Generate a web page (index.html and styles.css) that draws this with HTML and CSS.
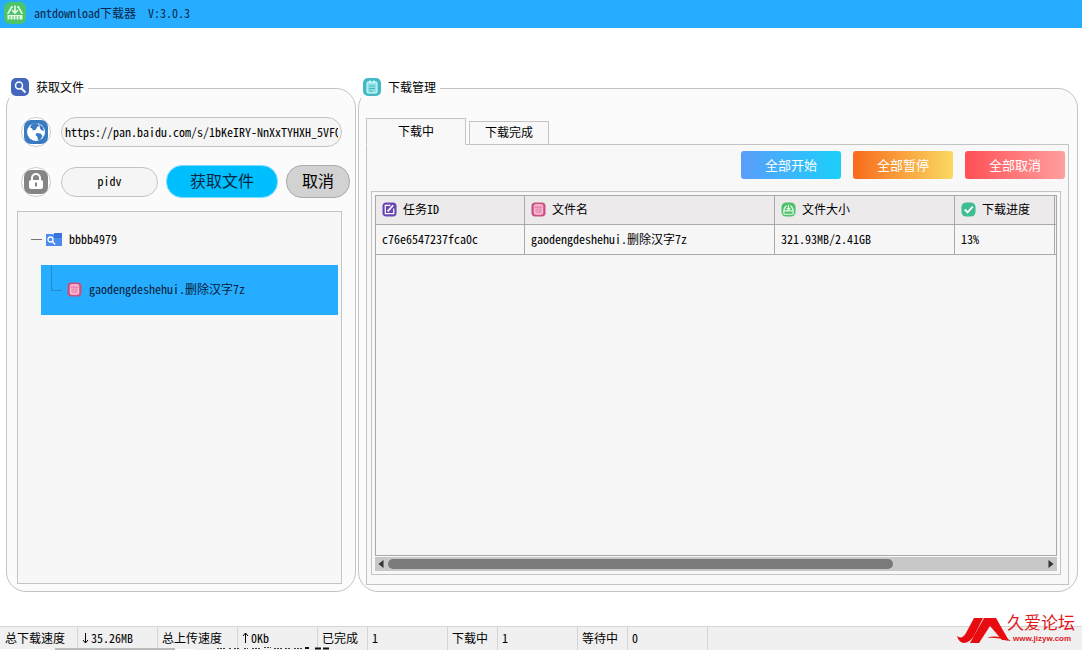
FILE: index.html
```html
<!DOCTYPE html>
<html lang="zh-CN">
<head>
<meta charset="utf-8">
<title>antdownload下载器</title>
<link rel="stylesheet" href="styles.css">
</head>
<body>
<svg class="sprite" aria-hidden="true">
  <symbol id="i-disk" viewBox="0 0 22 22">
    <rect width="22" height="22" rx="6" fill="#4cc46a"/>
    <path d="M9 5H7.500L3.500 12.500M13 5h1.500l4 7.500M11 3.500v7M8 8l3 3 3-3" fill="none" stroke="#e6fbe6" stroke-width="1.600"/>
    <path d="M3 12.500h16V18H3zM6 14v4M9 14v4M12 14v4M15 14v4" fill="#e6fbe6" stroke="#4cc46a" stroke-width="1"/>
  </symbol>
  <symbol id="i-size" viewBox="0 0 16 16">
    <rect x=".5" y=".5" width="15" height="15" rx="5" fill="#4fc16c"/>
    <path d="M6 4Q3 6 3 9.500M10 4q3 2 3 5.500M8 3v5M6 6.500l2 2 2-2" fill="none" stroke="#e6fbe6" stroke-width="1.200"/>
    <rect x="3" y="9.500" width="10" height="3.500" rx="1" fill="none" stroke="#e6fbe6" stroke-width="1.200"/>
  </symbol>
  <symbol id="i-file" viewBox="0 0 16 16">
    <rect x=".5" y=".5" width="15" height="15" rx="4" fill="#c94f80"/>
    <rect x="3.500" y="3" width="9" height="10" rx="1" fill="#f3a0c1" stroke="#ffd3e5"/>
    <path d="M3.500 5.500h9" stroke="#e07fa9"/><path d="M6.500 7v4.500M9.500 7v4.500" stroke="#e583ab"/>
  </symbol>
</svg>
<header class="titlebar">
  <svg class="app-icon"><use href="#i-disk"/></svg>
  <h1>antdownload下载器&nbsp; V:3.0.3</h1>
</header>
<main class="workspace">
  <fieldset class="panel fetch">
    <legend>
      <svg class="legend-icon" viewBox="0 0 18 18"><rect width="18" height="18" rx="5" fill="#4467bd"/><circle cx="8" cy="7.500" r="3.500" fill="none" stroke="#fff" stroke-width="1.500"/><path d="M10.500 10.500l4 4" stroke="#fff" stroke-width="2"/></svg>
      <span>获取文件</span>
    </legend>
    <form class="fetch-form">
      <label class="round" for="link" aria-label="链接">
        <svg viewBox="0 0 24 24"><rect width="24" height="24" rx="7" fill="#397bc3"/><circle cx="12" cy="12" r="9" fill="#fff"/><path d="M8 4q3-1.500 6-.5l1 2.500-2 1-1 2.500-3 1-1-2-2-1zM15 4l4 3 1 4-3-1-1-2zM12.500 13l4 .5 2 2.500-2 3.500-2.500 1-.500-3.500-2-2z" fill="#397bc3"/></svg>
      </label>
      <input id="link" class="field wide" type="text" value="https://pan.baidu.com/s/1bKeIRY-NnXxTYHXH_5VFQ">
      <label class="round" for="code" aria-label="提取码">
        <svg viewBox="0 0 24 24"><rect width="24" height="24" rx="7" fill="#858585"/><path d="M8 11V8a4 4 0 0 1 8 0v3" fill="none" stroke="#fff" stroke-width="2"/><rect x="5" y="10" width="14" height="9" rx="2" fill="#fff"/><path d="M12 12.500v4" stroke="#858585" stroke-width="2"/></svg>
      </label>
      <input id="code" class="field code" type="text" value="pidv">
      <button class="pill primary" type="button">获取文件</button>
      <button class="pill" type="button">取消</button>
    </form>
    <div class="tree">
      <div class="node">
        <span class="dash"></span>
        <svg class="folder" viewBox="0 0 16 13"><path d="M0 1h7l1 1V0h8v13H0z" fill="#4a8bed"/><path d="M8 0h8v5H8z" fill="#3874dc"/><circle cx="4.500" cy="6.500" r="2.500" fill="none" stroke="#fff" stroke-width="1.300"/><path d="M6.500 8.500l2.500 3" stroke="#fff" stroke-width="1.300"/></svg>
        <span>bbbb4979</span>
      </div>
      <div class="node child">
        <span class="elbow"></span>
        <svg class="small-icon"><use href="#i-file"/></svg>
        <span>gaodengdeshehui.删除汉字7z</span>
      </div>
    </div>
  </fieldset>
  <fieldset class="panel manage">
    <legend>
      <svg class="legend-icon" viewBox="0 0 18 18"><rect width="18" height="18" rx="5" fill="#42b9c4"/><rect x="4" y="4" width="10" height="11" rx="1" fill="#8ee0e3" stroke="#d8ffff"/><path d="M7 2.500v3M11 2.500v3" stroke="#d8ffff" stroke-width="1.500"/><path d="M6 8h6M6 10.500h6M6 13h4" stroke="#42b9c4"/></svg>
      <span>下载管理</span>
    </legend>
    <nav class="tabs">
      <button class="tab active" type="button">下载中</button>
      <button class="tab" type="button">下载完成</button>
    </nav>
    <section class="sheet">
      <div class="actions">
        <button class="start" type="button">全部开始</button>
        <button class="pause" type="button">全部暂停</button>
        <button class="cancel" type="button">全部取消</button>
      </div>
      <div class="table-frame">
        <div class="table-box">
          <table>
            <colgroup><col class="c-id"><col class="c-name"><col class="c-size"><col class="c-prog"><col></colgroup>
            <thead>
              <tr>
                <th><span class="head"><svg class="small-icon" viewBox="0 0 16 16"><rect x=".5" y=".5" width="15" height="15" rx="4" fill="#6845b5"/><path d="M9 3.500H3.500v9h9V7" fill="none" stroke="#fff" stroke-width="1.300"/><path d="M6 10l6-6.500" stroke="#fff" stroke-width="1.800"/></svg>任务ID</span></th>
                <th><span class="head"><svg class="small-icon"><use href="#i-file"/></svg>文件名</span></th>
                <th><span class="head"><svg class="small-icon"><use href="#i-size"/></svg>文件大小</span></th>
                <th><span class="head"><svg class="small-icon" viewBox="0 0 16 16"><rect x=".5" y=".5" width="15" height="15" rx="5" fill="#3dbd91"/><path d="M4 8l3 3 5.500-6" fill="none" stroke="#fff" stroke-width="2"/></svg>下载进度</span></th>
                <td></td>
              </tr>
            </thead>
            <tbody>
              <tr><td>c76e6547237fca0c</td><td>gaodengdeshehui.删除汉字7z</td><td>321.93MB/2.41GB</td><td>13%</td><td></td></tr>
            </tbody>
          </table>
        </div>
        <div class="scroll">
          <svg class="arrow" viewBox="0 0 6 10"><path d="M5.500 1v8L.500 5z" fill="#333"/></svg>
          <div class="track"><div class="thumb"></div></div>
          <svg class="arrow" viewBox="0 0 6 10"><path d="M.500 1v8l5-4z" fill="#333"/></svg>
        </div>
      </div>
    </section>
  </fieldset>
</main>
<footer class="status">
  <span class="cell label">总下载速度</span><span class="cell label"><svg class="vec" viewBox="0 0 7 12"><path d="M3.500 1v10M1 8l2.500 3L6 8" fill="none" stroke="#000"/></svg>35.26MB</span>
  <span class="cell label">总上传速度</span><span class="cell label"><svg class="vec" viewBox="0 0 7 12"><path d="M3.500 11V1M1 4l2.500-3L6 4" fill="none" stroke="#000"/></svg>0Kb</span>
  <span class="cell tag">已完成</span><span class="cell count">1</span>
  <span class="cell tag">下载中</span><span class="cell count">1</span>
  <span class="cell tag">等待中</span><span class="cell count">0</span>
  <svg class="strip" viewBox="0 0 340 3" aria-hidden="true">
    <path d="M0 2h50v1H0zM175 2h20v1h-20z" fill="#fff"/>
    <path d="M55 1h120v2H55z" fill="#b9b9b9"/>
    <path d="M217 1.500h9M229 1.500h3M234 1.500h6M244 1.500h4M252 1.500h9M264 .500h7M274 1.500h8M285 1.500h6M294 1.500h8" stroke="#444" stroke-dasharray="2 1"/>
    <path d="M305 1h4M315 1.500h6M323 1.500h6" stroke="#111" stroke-width="2"/>
  </svg>
  <a class="brand" href="#">
    <svg viewBox="0 0 54 27"><path d="M17 1h9L17 19q-5 7-10 7-5 0-7-7 5 4 9-3z" fill="#e80c10"/><path d="M27 1h12l12 21 3 2q-5-1-9-1L33 9 22 26h-9z" fill="#e80c10"/><path d="M30 21q10-4 22 3-11-4-22-3z" fill="#e80c10"/></svg>
    <span class="brand-text"><b>久爱论坛</b><small>www.jizyw.com</small></span>
  </a>
</footer>
</body>
</html>
```
FILE: styles.css
```css
* { box-sizing: border-box; }
body {
  margin: 0;
  min-height: 100vh;
  display: flex;
  flex-direction: column;
  background: #fff;
  color: #000;
  font: 12px/16px "Noto Sans Mono CJK SC", "Liberation Mono", "Noto Sans CJK SC", monospace;
}
button, input { font: inherit; color: inherit; margin: 0; }
svg { display: block; flex: none; }
.sprite { position: absolute; width: 0; height: 0; }

.titlebar { height: 28px; display: flex; align-items: center; gap: 8px; padding: 0 4px 2px; background: #26adff; }
.app-icon { width: 22px; height: 22px; }
.titlebar h1 { margin: 0; font-size: 12px; font-weight: 400; color: #0c2548; }

.workspace { flex: 1; display: grid; grid-template-columns: 350px minmax(0, 1fr); gap: 2px; padding: 50px 4px 34px 6px; }
.panel {
  min-width: 0;
  margin: 0;
  border: 1px solid #c4c4c4;
  border-radius: 20px;
  background: #fbfbfb;
  display: flex;
  flex-direction: column;
}
.panel legend { display: flex; align-items: center; gap: 7px; height: 20px; padding: 0 4px 2px; }
.legend-icon { width: 18px; height: 18px; }
.fetch { padding: 19px 13px 7px 10px; }
.manage { padding: 20px 8px 6px 7px; }
.fetch legend { margin-left: -10px; }
.manage legend { margin-left: -7px; }

.fetch-form { display: grid; grid-template-columns: 32px 97px 112px 64px; column-gap: 8px; row-gap: 18px; align-items: center; padding-left: 4px; margin-right: -8px; }
.round { width: 30px; height: 30px; border: 1px solid #ccc; border-radius: 50%; display: grid; place-items: center; background: #fff; }
.round svg { width: 24px; height: 24px; }
.field { height: 30px; min-width: 0; border: 1px solid #c4c4c4; border-radius: 15px; background: #f5f5f5; padding: 0 3px 2px; }
.wide { grid-column: 2 / 5; margin-right: 8px; }
.code { text-align: center; }
.pill { height: 33px; padding: 0 0 4px; border: 1px solid #aaa; border-radius: 16px; background: #d2d2d2; font-size: 16px; }
.pill.primary { background: #00bfff; border-color: #7edbff; color: #06283f; }

.tree { flex: 1; margin-top: 13px; padding: 3px; border: 1px solid #c4c4c4; background: #f7f7f7; }
.node { height: 50px; display: flex; align-items: center; gap: 7px; padding: 0 0 2px 10px; }
.dash { width: 11px; height: 1px; background: #777; margin-right: -3px; }
.folder { width: 16px; height: 13px; }
.node.child { margin-left: 20px; background: #26adff; color: #08203c; }
.elbow { width: 11px; height: 26px; align-self: flex-start; border: solid #268bc6; border-width: 0 0 1px 1px; margin-right: -2px; }
.small-icon { width: 15px; height: 15px; }

.tabs { display: flex; align-items: flex-end; gap: 3px; height: 27px; }
.tab { width: 80px; height: 24px; padding: 0 0 2px; border: 1px solid #c4c4c4; background: #f8f8f8; position: relative; }
.tab.active { width: 100px; height: 27px; border-bottom-color: #f8f8f8; z-index: 1; }
.sheet { flex: 1; display: flex; flex-direction: column; margin-top: -1px; border: 1px solid #c4c4c4; background: #f8f8f8; padding: 6px 3px 9px 4px; }
.actions { display: flex; justify-content: flex-end; gap: 12px; }
.actions button { width: 100px; height: 28px; padding: 0; border: 0; border-radius: 3px; color: #fff; font-size: 13px; }
.start { background: linear-gradient(90deg, #5a9dfa, #1bd0fb); }
.pause { background: linear-gradient(90deg, #f76b1c, #fad961); }
.cancel { background: linear-gradient(90deg, #ff5055, #ff9e9e); }
.table-frame { flex: 1; display: flex; flex-direction: column; margin: 12px 4px 0 0; padding: 3px; border: 1px solid #c4c4c4; }
.table-box { flex: 1; border: 1px solid #a9a9a9; background: #f6f6f6; overflow: hidden; }
table { width: 100%; table-layout: fixed; border-collapse: separate; border-spacing: 0; }
.c-id { width: 149px; }
.c-name { width: 250px; }
.c-size { width: 180px; }
.c-prog { width: 100px; }
th, td { padding: 0 6px 2px; border: solid #a9a9a9; border-width: 0 1px 1px 0; font-weight: 400; text-align: left; white-space: nowrap; }
td { height: 30px; }
td:last-child { padding: 0; border-right: 0; }
thead th, thead td { height: 29px; background: #eceaeb; }
.head { display: flex; align-items: center; gap: 6px; }
.scroll { height: 14px; margin-top: 1px; display: flex; align-items: center; gap: 4px; padding: 0 3px; background: #c8c8c8; }
.arrow { width: 6px; height: 10px; }
.track { flex: 1; }
.thumb { width: 77%; height: 10px; border-radius: 5px; background: #7a7a7a; }

.status { position: relative; display: flex; height: 24px; border-top: 1px solid #d5d5d5; background: #f0f0f0; }
.cell { display: flex; align-items: center; gap: 2px; padding: 0 0 2px 4px; border-right: 1px solid #d5d5d5; white-space: nowrap; }
.label { width: 80px; }
.label:first-child { width: 78px; padding-left: 5px; }
.tag { width: 50px; }
.count { width: 80px; }
.vec { width: 7px; height: 12px; }
.strip { position: absolute; left: 0; bottom: 0; width: 340px; height: 3px; }
.brand { position: absolute; right: 7px; bottom: 6px; display: flex; color: #e0191d; text-decoration: none; }
.brand > svg { width: 54px; height: 27px; }
.brand-text { display: flex; flex-direction: column; margin: -2px 0 0 -4px; }
.brand b { font: 400 17px/18px "Liberation Sans", "Noto Sans CJK SC", sans-serif; }
.brand small { font: 700 8px/10px "Liberation Sans", sans-serif; padding: 1px 0 0 6px; }
```
